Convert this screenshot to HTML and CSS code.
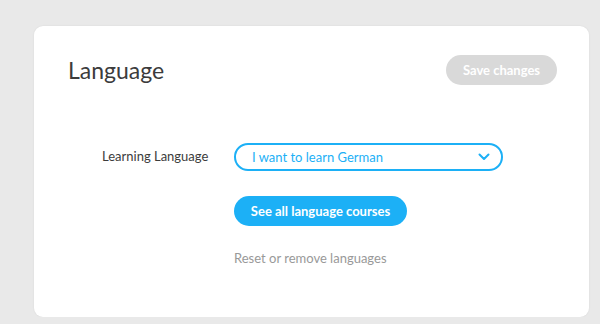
FILE: index.html
```html
<!doctype html>
<html>
<head>
<meta charset="utf-8">
<meta name="viewport" content="width=device-width, initial-scale=1">
<title>Language settings</title>
<link rel="stylesheet" href="styles.css">
</head>
<body>
<div class="card">
	<div class="head">
		<h1>Language</h1>
		<button class="save">Save changes</button>
	</div>
	<div class="row">
		<label class="label">Learning Language</label>
		<div class="fields">
			<div class="select">
				<span>I want to learn German</span>
				<svg class="chev" width="12" height="8" viewBox="0 0 12 8"><path d="M1.5 1.5 L6 6 L10.5 1.5" fill="none" stroke="#1cb0f6" stroke-width="2" stroke-linecap="round" stroke-linejoin="round"/></svg>
			</div>
			<button class="courses">See all language courses</button>
			<a class="reset" href="#">Reset or remove languages</a>
		</div>
	</div>
</div>
</body>
</html>
```

FILE: styles.css
```css
body{
	margin:0;
	background-color:#e9e9e9;
	font-family:Lato, "Open Sans", Arial, sans-serif;
	color:#3c3c3c;
	padding:26px 11px 0 34px;
	}
.card{
	width:555px;
	height:291px;
	box-sizing:border-box;
	background:#fff;
	border-radius:9px;
	box-shadow:0 0 2px rgba(0,0,0,.08);
	padding:29px 32px 0 34px;
	}
.head{
	display:flex;
	justify-content:space-between;
	align-items:center;
	}
h1{
	margin:0;
	font-size:23px;
	font-weight:400;
	line-height:30px;
	color:#3c3c3c;
	}
.save{
	width:111px;
	height:30px;
	border:none;
	border-radius:15px;
	background:#d9d9d9;
	color:#fff;
	font-family:inherit;
	font-size:13px;
	font-weight:700;
	padding:0;
	}
.row{
	display:grid;
	grid-template-columns:132px 269px;
	margin:58px 0 0 34px;
	}
.label{
	font-size:13px;
	line-height:16px;
	margin-top:5px;
	}
.fields{
	display:flex;
	flex-direction:column;
	align-items:flex-start;
	}
.select{
	width:269px;
	height:28px;
	box-sizing:border-box;
	border:2px solid #1cb0f6;
	border-radius:14px;
	display:flex;
	align-items:center;
	justify-content:space-between;
	padding:0 11px 0 16px;
	color:#1cb0f6;
	font-size:13px;
	}
.courses{
	margin-top:25px;
	width:173px;
	height:30px;
	border:none;
	border-radius:15px;
	background:#1cb0f6;
	color:#fff;
	font-family:inherit;
	font-size:13px;
	font-weight:700;
	padding:0;
	}
.reset{
	margin-top:24px;
	font-size:13px;
	line-height:16px;
	color:#999;
	text-decoration:none;
	}
```
